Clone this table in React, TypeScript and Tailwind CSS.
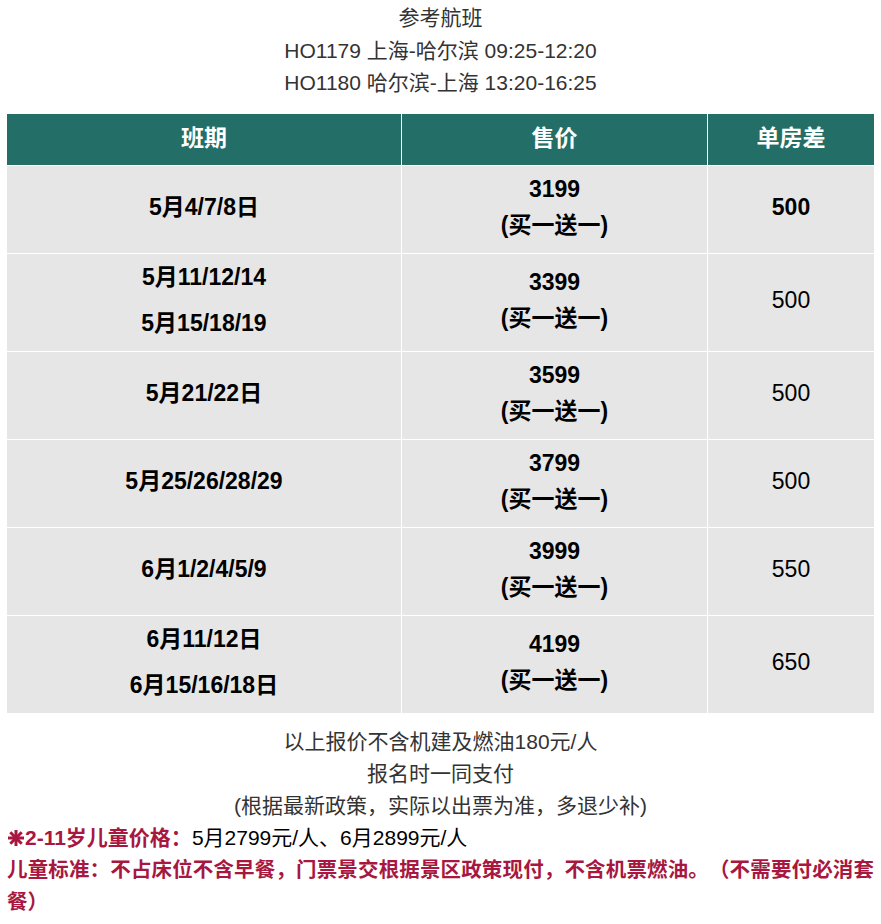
import React from "react";

const rows = [
  { dates: ["5月4/7/8日"], price: "3199", diff: "500", diffBold: true, tall: false },
  { dates: ["5月11/12/14", "5月15/18/19"], price: "3399", diff: "500", diffBold: false, tall: true },
  { dates: ["5月21/22日"], price: "3599", diff: "500", diffBold: false, tall: false },
  { dates: ["5月25/26/28/29"], price: "3799", diff: "500", diffBold: false, tall: false },
  { dates: ["6月1/2/4/5/9"], price: "3999", diff: "550", diffBold: false, tall: false },
  { dates: ["6月11/12日", "6月15/16/18日"], price: "4199", diff: "650", diffBold: false, tall: true },
];

function Star() {
  return (
    <svg width="18" height="18" viewBox="0 0 18 18" className="inline-block align-[-2px]">
      <g stroke="#a8173f" strokeWidth="3" strokeLinecap="butt">
        <line x1="9" y1="1" x2="9" y2="17" />
        <line x1="1" y1="9" x2="17" y2="9" />
        <line x1="3.3" y1="3.3" x2="14.7" y2="14.7" />
        <line x1="14.7" y1="3.3" x2="3.3" y2="14.7" />
      </g>
    </svg>
  );
}

export default function App() {
  return (
    <div
      className="w-[881px] min-h-[924px] bg-white px-[7px] pt-[2px] text-[21px] text-[#333] [text-spacing-trim:space-all]"
      style={{ fontFamily: '"Liberation Sans", "Noto Sans CJK SC", sans-serif' }}
    >
      <div className="flex flex-col items-center leading-[32.5px]">
        <div>参考航班</div>
        <div>HO1179 上海-哈尔滨 09:25-12:20</div>
        <div>HO1180 哈尔滨-上海 13:20-16:25</div>
      </div>

      <div className="mt-[14px] grid grid-cols-[394px_305px_166px] gap-px bg-white text-[23px]">
        <div className="flex h-[51px] items-center justify-center bg-[#236e66] pb-[2px] font-bold text-white">班期</div>
        <div className="flex h-[51px] items-center justify-center bg-[#236e66] pb-[2px] font-bold text-white">售价</div>
        <div className="flex h-[51px] items-center justify-center bg-[#236e66] pb-[2px] font-bold text-white">单房差</div>
        {rows.map((r, i) => (
          <React.Fragment key={i}>
            <div
              className={`flex flex-col items-center justify-center gap-[10px] bg-[#e6e6e6] pb-[4px] font-bold leading-[36px] text-black ${
                r.tall ? "h-[97px]" : "h-[87px]"
              }`}
            >
              {r.dates.map((d) => (
                <div key={d}>{d}</div>
              ))}
            </div>
            <div
              className={`flex flex-col items-center justify-center bg-[#e6e6e6] pb-[4px] font-bold leading-[36px] text-black ${
                r.tall ? "h-[97px]" : "h-[87px]"
              }`}
            >
              <div>{r.price}</div>
              <div>(买一送一)</div>
            </div>
            <div
              className={`flex items-center justify-center bg-[#e6e6e6] pb-[4px] text-black ${
                r.diffBold ? "font-bold" : ""
              } ${r.tall ? "h-[97px]" : "h-[87px]"}`}
            >
              {r.diff}
            </div>
          </React.Fragment>
        ))}
      </div>

      <div className="mt-[13px] flex flex-col items-center leading-[32px]">
        <div>以上报价不含机建及燃油180元/人</div>
        <div>报名时一同支付</div>
        <div>(根据最新政策，实际以出票为准，多退少补)</div>
      </div>
      <div className="leading-[32px]">
        <div>
          <span className="font-bold text-[#a8173f]">
            <Star />
            2-11岁儿童价格：
          </span>
          <span className="text-black">5月2799元/人、6月2899元/人</span>
        </div>
        <div className="text-justify text-[20.5px] font-bold text-[#a8173f]">
          儿童标准：不占床位不含早餐，门票景交根据景区政策现付，不含机票燃油。（不需要付必消套餐）
        </div>
      </div>
    </div>
  );
}
